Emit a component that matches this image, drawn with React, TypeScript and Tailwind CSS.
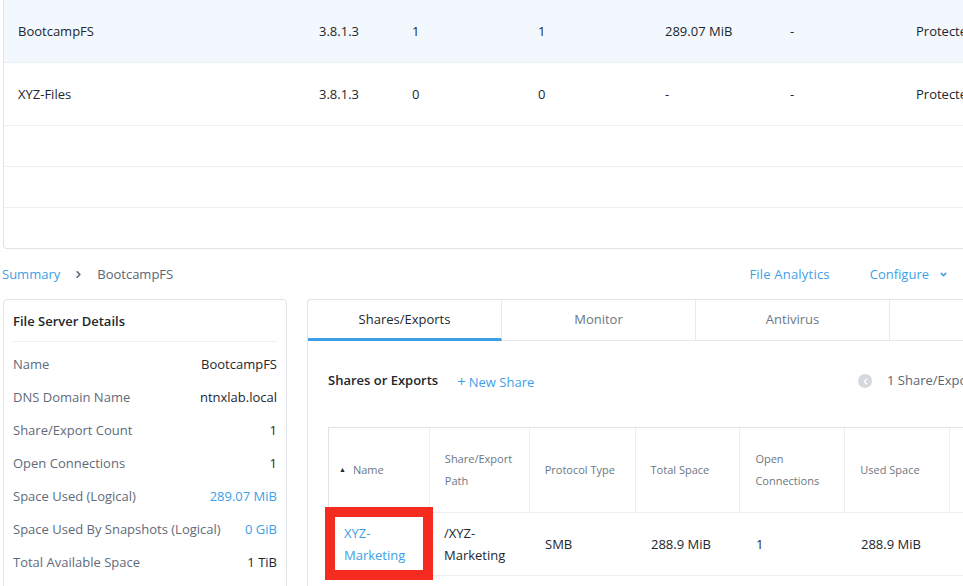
import { ChevronDown, ChevronLeft, ChevronRight } from 'lucide-react';

const topRows = [
  { name: 'BootcampFS', version: '3.8.1.3', a: '1', b: '1', used: '289.07 MiB', c: '-', dr: 'Protected' },
  { name: 'XYZ-Files', version: '3.8.1.3', a: '0', b: '0', used: '-', c: '-', dr: 'Protected' },
];

const details: { label: string; value: string; link?: boolean }[] = [
  { label: 'Name', value: 'BootcampFS' },
  { label: 'DNS Domain Name', value: 'ntnxlab.local' },
  { label: 'Share/Export Count', value: '1' },
  { label: 'Open Connections', value: '1' },
  { label: 'Space Used (Logical)', value: '289.07 MiB', link: true },
  { label: 'Space Used By Snapshots (Logical)', value: '0 GiB', link: true },
  { label: 'Total Available Space', value: '1 TiB' },
];

const tabs = ['Shares/Exports', 'Monitor', 'Antivirus', ''];

function TopTable() {
  return (
    <div className="ml-[3px] w-[1000px] border-l border-b border-[#dfe3e8] rounded-bl-[4px]">
      {topRows.map((r, i) => (
        <div
          key={r.name}
          className={`flex h-[63px] items-center border-b border-[#eceff2] pt-[1px] text-[13px] text-[#22272e] ${i === 0 ? 'bg-[#f2f8fd]' : ''}`}
        >
          <div className="w-[301px] pl-[14px]">{r.name}</div>
          <div className="w-[93px] pl-[14px]">{r.version}</div>
          <div className="w-[126px] pl-[14px]">{r.a}</div>
          <div className="w-[127px] pl-[14px]">{r.b}</div>
          <div className="w-[125px] pl-[14px]">{r.used}</div>
          <div className="w-[126px] pl-[14px]">{r.c}</div>
          <div className="pl-[14px]">{r.dr}</div>
        </div>
      ))}
      <div className="h-[41px] border-b border-[#eceff2]" />
      <div className="h-[41px] border-b border-[#eceff2]" />
      <div className="h-[40px]" />
    </div>
  );
}

function Breadcrumb() {
  return (
    <div className="flex h-[50px] items-center justify-between pl-[2px] pr-[15px] pt-[1px] text-[13px]">
      <div className="flex items-center">
        <span className="text-[#3d9fe8]">Summary</span>
        <ChevronRight className="ml-[13px] mr-[13px] h-[11px] w-[11px] text-[#5a6675]" strokeWidth={3.5} />
        <span className="text-[#5a6675]">BootcampFS</span>
      </div>
      <div className="flex items-center text-[#3d9fe8]">
        <span className="tracking-[0.2px]">File Analytics</span>
        <span className="ml-[40px]">Configure</span>
        <ChevronDown className="ml-[10px] h-[9px] w-[9px]" strokeWidth={4} />
      </div>
    </div>
  );
}

function DetailsCard() {
  return (
    <div className="ml-[3px] h-[300px] w-[284px] shrink-0 rounded-[4px] border border-[#dfe3e8] px-[9px]">
      <div className="flex h-[42px] items-center border-b border-[#eceff2] pt-[2px] text-[13px] font-semibold text-[#22272e]">
        File Server Details
      </div>
      <div className="pt-[6px]">
        {details.map((d) => (
          <div key={d.label} className="flex h-[33px] items-center justify-between text-[13px]">
            <span className="text-[#5f6b7a]">{d.label}</span>
            <span className={d.link ? 'text-[#3d9fe8]' : 'text-[#22272e]'}>{d.value}</span>
          </div>
        ))}
      </div>
    </div>
  );
}

function HeaderCell({ w, children, last }: { w: string; children: React.ReactNode; last?: boolean }) {
  return (
    <div className={`${w} flex h-full items-center pl-[15px] ${last ? '' : 'border-r border-[#eceff2]'}`}>
      <div className="text-[11px] leading-[22px] text-[#6b7785]">{children}</div>
    </div>
  );
}

function SharesPanel() {
  return (
    <div className="ml-[20px] h-[300px] w-[710px] shrink-0 rounded-tl-[4px] border-l border-t border-[#dfe3e8]">
      <div className="flex h-[41px] border-b border-[#e8ebee] text-[13px]">
        {tabs.map((t, i) => (
          <div
            key={i}
            className={`flex w-[194px] shrink-0 items-center justify-center border-r border-[#e8ebee] ${
              i === 0 ? 'mb-[-1px] border-b-[3px] border-b-[#3d9fe8] pt-[2px] text-[#22272e]' : 'text-[#6b7785]'
            }`}
          >
            {t}
          </div>
        ))}
      </div>
      <div className="px-[20px] pt-[27px]">
        <div className="flex h-[26px] items-center text-[13px]">
          <span className="font-semibold text-[#22272e]">Shares or Exports</span>
          <span className="ml-[19px] text-[#3d9fe8]">
            <span className="mr-[3px] text-[15px]">+</span>New Share
          </span>
          <div className="ml-auto flex w-[139px] shrink-0 items-center whitespace-nowrap text-[#5a6675]">
            <span className="mr-[15px] flex h-[14px] w-[14px] shrink-0 items-center justify-center rounded-full bg-[#d5d9de]">
              <ChevronLeft className="h-[9px] w-[9px] text-white" strokeWidth={4} />
            </span>
            <span>1 Share/Export</span>
          </div>
        </div>
        <div className="mt-[33px] w-[700px] border-l border-t border-[#dfe3e8]">
          <div className="flex h-[85px] border-b border-[#eceff2]">
            <div className="flex h-full w-[101px] items-center border-r border-[#eceff2] pl-[10px] text-[11px] text-[#6b7785]">
              <span className="mr-[7px] text-[7px] text-[#22272e]">▲</span>Name
            </div>
            <HeaderCell w="w-[100px]">
              Share/Export
              <br />
              Path
            </HeaderCell>
            <HeaderCell w="w-[106px]">Protocol Type</HeaderCell>
            <HeaderCell w="w-[105px]">Total Space</HeaderCell>
            <HeaderCell w="w-[105px]">
              Open
              <br />
              Connections
            </HeaderCell>
            <HeaderCell w="w-[105px]">Used Space</HeaderCell>
            <HeaderCell w="w-[78px]" last>
              {''}
            </HeaderCell>
          </div>
          <div className="flex h-[63px] items-center border-b border-[#eceff2] text-[13px] leading-[22px] text-[#22272e]">
            <div className="w-[101px] pl-[15px] text-[#3d9fe8]">
              XYZ-
              <br />
              Marketing
            </div>
            <div className="w-[100px] pl-[14px]">
              /XYZ-
              <br />
              Marketing
            </div>
            <div className="w-[106px] pl-[15px]">SMB</div>
            <div className="w-[105px] pl-[15px]">288.9 MiB</div>
            <div className="w-[105px] pl-[15px]">1</div>
            <div className="w-[105px] pl-[15px]">288.9 MiB</div>
          </div>
        </div>
      </div>
    </div>
  );
}

export default function App() {
  return (
    <div className="relative h-[586px] w-[963px] overflow-hidden bg-white font-['Open_Sans',sans-serif]">
      <TopTable />
      <Breadcrumb />
      <div className="flex">
        <DetailsCard />
        <SharesPanel />
      </div>
      {/* annotation box */}
      <div className="absolute left-[325px] top-[507px] h-[73px] w-[108px] border-[10px] border-[#f62b1f]" />
    </div>
  );
}
